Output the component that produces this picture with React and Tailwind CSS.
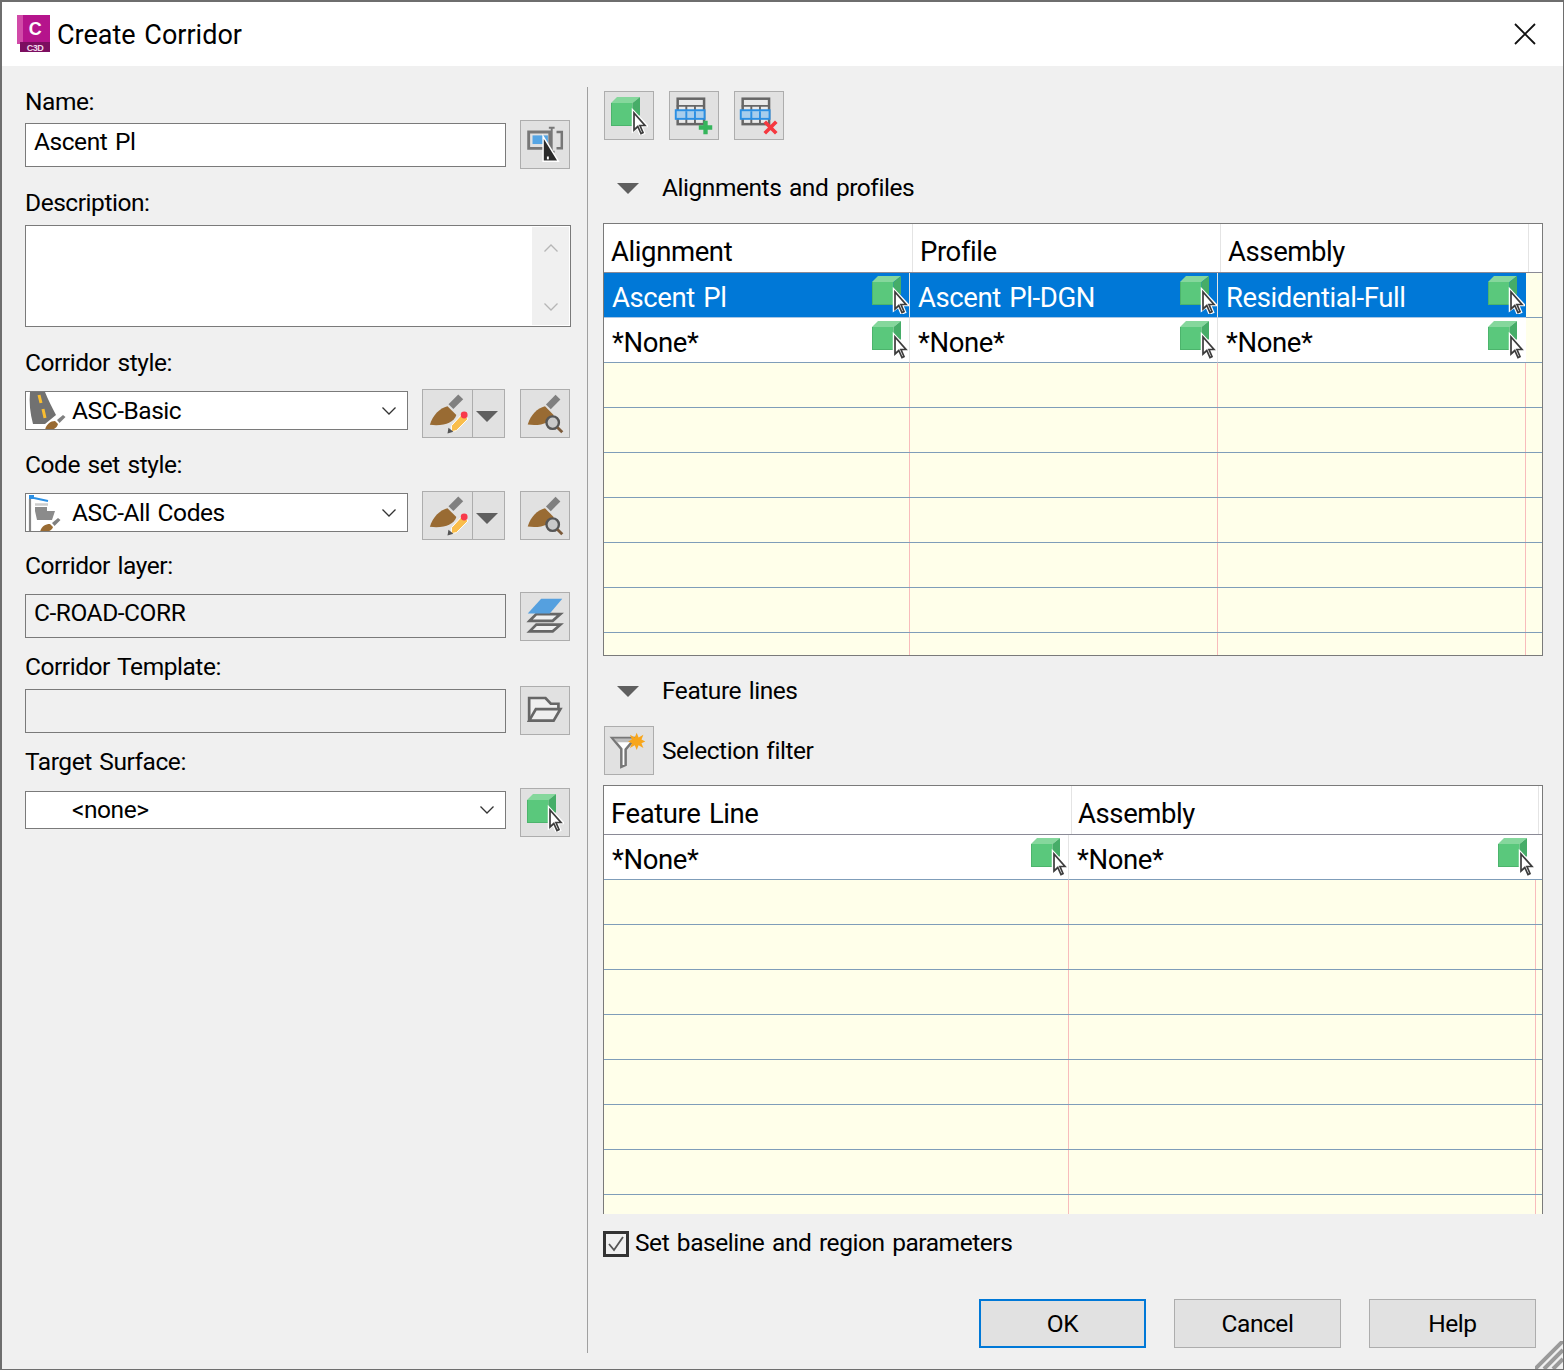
const CubeCursor = ({ className = "" }) => (
  <svg viewBox="7 6 37 38" className={`w-[37px] h-[38px] shrink-0 ${className}`}>
    <polygon points="7,12 13,6 36,6 28.500,12" fill="#85d79c" />
    <rect x="7" y="12" width="21.500" height="23" fill="#5ac87c" />
    <path d="M7 35h21.500v-1H8V12H7z" fill="#4cb46c" />
    <polygon points="28.500,12 36,6 36,24 28.500,32" fill="#46ad68" />
    <polygon points="29,20 29,40 33.500,36.500 36.500,43.500 40,42 37,35 43,35" fill="#fff" stroke="#fff" strokeWidth="2.500" />
    <polygon points="30,22 30,39 33.800,35.500 37,42.500 39,41.500 36,34.500 41,34.500" fill="#fff" stroke="#3c3c3c" strokeWidth="1.700" />
  </svg>
);

const Brush = () => (
  <>
    <path d="M7 36C10 26 17 19 25 17l9 9c-2 8-14 12-27 10z" fill="#996b33" />
    <path d="M26 15L36 5l5 5-10 10z" fill="#808080" />
  </>
);

const BrushEdit = () => (
  <svg viewBox="0 0 50 49" className="w-[50px] h-[49px]">
    <Brush />
    <path d="M29 37l11-12 6 5-12 12-5 1z" fill="#f9bd4b" stroke="#fff" strokeWidth="1" />
    <circle cx="42" cy="26" r="3.500" fill="#f8394a" />
    <path d="M26 39l5 4-6 2z" fill="#555" />
  </svg>
);

const BrushSearch = () => (
  <svg viewBox="0 0 50 49" className="w-[50px] h-[49px]">
    <Brush />
    <circle cx="33" cy="34" r="6.500" fill="#c9c9c9" stroke="#565656" strokeWidth="2.500" />
    <path d="M38 39l5 5" stroke="#7b5a3a" strokeWidth="3" />
  </svg>
);

const Naming = () => (
  <svg viewBox="0 0 50 49" className="w-[50px] h-[49px]">
    <path d="M8 11.500h22v17H8z" fill="none" stroke="#777" strokeWidth="3" />
    <rect x="12" y="15" width="16" height="9" fill="#55a5e4" />
    <path d="M29 7h6M32 7v25M29 32h6" stroke="#777" strokeWidth="2" fill="none" />
    <path d="M37 11.500h5.500v17H37" stroke="#777" strokeWidth="2.600" fill="none" />
    <polygon points="23,16 23,42 39,42" fill="#2b2b2b" stroke="#fff" strokeWidth="1.500" />
    <rect x="27" y="37" width="2" height="3" fill="#fff" />
  </svg>
);

const TableIcon = ({ children }) => (
  <svg viewBox="0 0 50 49" className="w-[50px] h-[49px]">
    <rect x="8" y="7" width="27.500" height="26.500" fill="#e9e9e9" stroke="#666" strokeWidth="2.600" />
    <path d="M7 14.500h29M17 14v20M26 14v20" stroke="#666" strokeWidth="2" />
    <rect x="6" y="19" width="30" height="9" fill="#a7cdec" stroke="#2b8fe3" strokeWidth="2" />
    <path d="M17 20v8M26 20v8" stroke="#2b8fe3" strokeWidth="2" />
    {children}
  </svg>
);

const Layers = () => (
  <svg viewBox="0 0 50 49" className="w-[50px] h-[49px]">
    <path d="M9 40l7-7h25l-8 7H9z" fill="#efefef" stroke="#666" strokeWidth="2.800" />
    <path d="M9 29l7-7h25l-8 7H9z" fill="#efefef" stroke="#666" strokeWidth="2.800" />
    <polygon points="7,21.500 21,6 43,6 30,21.500" fill="#55a0df" />
  </svg>
);

const Folder = () => (
  <svg viewBox="0 0 50 49" className="w-[50px] h-[49px]">
    <path d="M8.500 35V11.500h17l5.500 6h8V23" fill="#efefef" stroke="#666" strokeWidth="2.800" />
    <path d="M8.500 35l7-12H41l-7 12z" fill="#efefef" stroke="#666" strokeWidth="2.800" />
  </svg>
);

const Filter = () => (
  <svg viewBox="0 0 50 49" className="w-[50px] h-[49px]">
    <path d="M7.500 11.500h24l-10 12v16l-4.500 2V23z" fill="#fff" stroke="#777" strokeWidth="2.600" />
    <path d="M9 12h21l-3 4H13z" fill="#bdbdbd" />
    <polygon points="33,6 35,11 40,8 38,13 42,15 38,17 40,22 35,19 33,24 31,19 26,22 28,17 24,15 28,13 26,8 31,11" fill="#f8a61b" />
  </svg>
);

const RoadStyle = () => (
  <svg viewBox="0 0 40 40" className="w-[40px] h-[40px] shrink-0">
    <path d="M4 1h15c3 8 7 15 11 23L19 33H7C4 22 3 11 4 1z" fill="#717171" />
    <path d="M13 4l2 8M17 18l2 9" stroke="#f9bd31" strokeWidth="3" fill="none" />
    <path d="M19 39c1-5 5-9 10-9l3 3c-1 5-7 7-13 6z" fill="#996b33" />
    <path d="M31 29l6-5 2.500 2-6 6z" fill="#808080" />
  </svg>
);

const CodeStyle = () => (
  <svg viewBox="0 0 40 40" className="w-[40px] h-[40px] shrink-0">
    <rect x="3" y="2" width="5" height="4" fill="#2b8fe3" />
    <path d="M8 5l14 3" stroke="#2b8fe3" strokeWidth="1.800" />
    <path d="M4 6v33" stroke="#888" strokeWidth="2.200" />
    <path d="M9 14h12v4h8l-3 9H11l-2-9z" fill="#8b8b8b" />
    <path d="M9 11.500h13" stroke="#ccc" strokeWidth="2.500" />
    <path d="M14 39c1-5 5-8 10-8l3 3c-1 4-7 6-13 5z" fill="#996b33" />
    <path d="M26 30l6-5 2.500 2-6 6z" fill="#808080" />
  </svg>
);

const Chevron = ({ className = "" }) => (
  <svg viewBox="0 0 16 10" className={`w-[16px] h-[10px] ${className}`}>
    <path d="M1.500 1.500L8 8l6.500-6.500" fill="none" stroke="#333" strokeWidth="1.300" />
  </svg>
);

const Triangle = ({ className = "" }) => (
  <svg viewBox="0 0 22 11" className={`w-[22px] h-[11px] ${className}`}>
    <polygon points="0,0 22,0 11,11" fill="#5f5f5f" />
  </svg>
);

const Btn = ({ children }) => (
  <div className="w-[50px] h-[49px] shrink-0 bg-[#e1e1e1] border border-[#adadad] flex items-center justify-center overflow-hidden">
    {children}
  </div>
);

const SplitBtn = () => (
  <div className="w-[83px] h-[49px] shrink-0 bg-[#e1e1e1] border border-[#adadad] flex items-center">
    <div className="w-[50px] h-full border-r border-[#adadad] flex items-center justify-center">
      <BrushEdit />
    </div>
    <div className="flex-1 flex items-center justify-center pr-[4px] pt-[6px]">
      <Triangle />
    </div>
  </div>
);

const Label = ({ className = "", children }) => (
  <div className={`h-[34px] leading-[34px] text-[24.500px] text-black ${className}`}>{children}</div>
);

const Combo = ({ icon, text, className = "" }) => (
  <div className={`bg-white border border-[#7a7a7a] flex items-center text-[24.500px] overflow-hidden ${className}`}>
    <div className="w-[46px] shrink-0">{icon}</div>
    <span className="flex-1 pt-[1px]">{text}</span>
    <Chevron className="mr-[10px]" />
  </div>
);

const Cell = ({ text, selected, last, w }) => (
  <div
    className={`${w} h-[45px] flex items-start justify-between border-b ${
      selected ? "bg-[#0078d7] text-white border-[#a9c6e4]" : "bg-white text-black border-[#7f9db9]"
    } ${last ? "pr-[1px]" : "border-r border-r-[#e4e4e4]"}`}
  >
    <span className="pl-[8px] leading-[49px]">{text}</span>
    <CubeCursor className="mt-[3px]" />
  </div>
);

const EmptyRow = ({ cols }) => (
  <div className="flex h-[45px] shrink-0 border-b border-[#7f9db9]">
    {cols.map((w) => (
      <div key={w} className={`${w} h-full bg-[#ffffea] border-r border-[#f8bcbc]`} />
    ))}
    <div className="flex-1 bg-[#ffffea]" />
  </div>
);

const AlignCols = ["w-[306px]", "w-[308px]", "w-[308px]"];
const FeatureCols = ["w-[465px]", "w-[467px]"];

const AlignTable = () => (
  <div className="mt-[18px] w-[940px] h-[433px] border border-[#7a7a7a] bg-[#ffffea] overflow-hidden text-[27.500px] tracking-[-0.4px]">
    <div className="flex h-[49px] bg-white border-b border-[#8a8a96]">
      <div className="w-[309px] border-r border-[#e4e4e4] pl-[7px] leading-[56px]">Alignment</div>
      <div className="w-[308px] border-r border-[#e4e4e4] pl-[7px] leading-[56px]">Profile</div>
      <div className="w-[308px] border-r border-[#e4e4e4] pl-[7px] leading-[56px]">Assembly</div>
    </div>
    <div className="flex">
      <Cell w="w-[306px]" selected text="Ascent Pl" />
      <Cell w="w-[308px]" selected text="Ascent Pl-DGN" />
      <Cell w="w-[308px]" selected last text="Residential-Full" />
      <div className="flex-1 border-b border-[#7f9db9]" />
    </div>
    <div className="flex">
      <Cell w="w-[306px]" text="*None*" />
      <Cell w="w-[308px]" text="*None*" />
      <Cell w="w-[308px]" last text="*None*" />
      <div className="flex-1 border-b border-[#7f9db9]" />
    </div>
    {[1, 2, 3, 4, 5, 6, 7].map((r) => (
      <EmptyRow key={r} cols={AlignCols} />
    ))}
  </div>
);

const FeatureTable = () => (
  <div className="mt-[10px] w-[940px] h-[429px] border-x border-t border-[#7a7a7a] bg-[#ffffea] overflow-hidden text-[27.500px] tracking-[-0.4px]">
    <div className="flex h-[49px] bg-white border-b border-[#8a8a96]">
      <div className="w-[468px] border-r border-[#e4e4e4] pl-[7px] leading-[56px]">Feature Line</div>
      <div className="w-[467px] border-r border-[#e4e4e4] pl-[6px] leading-[56px]">Assembly</div>
    </div>
    <div className="flex">
      <Cell w="w-[465px]" text="*None*" />
      <Cell w="w-[467px]" last text="*None*" />
      <div className="flex-1 bg-white border-b border-[#7f9db9]" />
    </div>
    {[1, 2, 3, 4, 5, 6, 7, 8].map((r) => (
      <EmptyRow key={r} cols={FeatureCols} />
    ))}
  </div>
);

const DialogBtn = ({ children, primary }) => (
  <div
    className={`w-[167px] h-[49px] bg-[#e1e1e1] flex items-center justify-center pt-[2px] text-[24.500px] ${
      primary ? "border-2 border-[#0078d7]" : "border border-[#adadad]"
    }`}
  >
    {children}
  </div>
);

export default function App() {
  return (
    <div className="relative box-border w-[1564px] h-[1370px] overflow-hidden bg-[#f0f0f0] border-l-2 border-t-2 border-r border-b border-[#6e6e6e] text-black font-['Roboto',sans-serif] tracking-[-0.45px] [word-spacing:2px]">
      {/* Title bar */}
      <div className="h-[64px] bg-white flex items-center pl-[15px] pr-[27px]">
        <svg viewBox="0 0 34 37" className="w-[34px] h-[37px] shrink-0 mb-[2px]">
          <polygon points="0,0 33,0 33,37 3,37 3,29 0,29" fill="#b5148c" />
          <polygon points="0,0 6,0 6,29 0,29" fill="#d14aa8" />
          <rect x="3" y="27" width="30" height="10" fill="#7c0e60" />
          <text x="18" y="20" fontSize="18" fontWeight="700" fill="#fff" textAnchor="middle" fontFamily="Liberation Sans">C</text>
          <text x="18" y="35.500" fontSize="9" fontWeight="700" fill="#f0d8ea" textAnchor="middle" fontFamily="Liberation Sans">C3D</text>
        </svg>
        <span className="ml-[6px] pt-[2px] text-[27px] tracking-normal flex-1">Create Corridor</span>
        <svg viewBox="0 0 22 22" className="w-[22px] h-[22px]">
          <path d="M1 1l20 20M21 1L1 21" stroke="#111" strokeWidth="1.800" />
        </svg>
      </div>

      <div className="flex">
        {/* Left column */}
        <div className="ml-[23px] w-[546px] pt-[19px] shrink-0">
          <Label>Name:</Label>
          <div className="mt-[1px] flex items-start justify-between pr-[1px]">
            <div className="mt-[3px] w-[481px] h-[44px] bg-white border border-[#7a7a7a] pl-[8px] text-[24.500px] leading-[35px]">Ascent Pl</div>
            <Btn><Naming /></Btn>
          </div>

          <Label className="mt-[17px]">Description:</Label>
          <div className="mt-[5px] h-[102px] bg-white border border-[#7a7a7a] flex justify-end">
            <div className="w-[37px] m-[1px] bg-[#f0f0f0] flex flex-col items-center justify-between pt-[16px] pb-[13px]">
              <Chevron className="rotate-180 opacity-30" />
              <Chevron className="opacity-30" />
            </div>
          </div>

          <Label className="mt-[19px]">Corridor style:</Label>
          <div className="mt-[9px] flex items-start">
            <Combo icon={<RoadStyle />} text="ASC-Basic" className="mt-[2px] w-[383px] h-[39px]" />
            <div className="ml-[14px]"><SplitBtn /></div>
            <div className="ml-[15px]"><Btn><BrushSearch /></Btn></div>
          </div>

          <Label className="mt-[10px]">Code set style:</Label>
          <div className="mt-[9px] flex items-start">
            <Combo icon={<CodeStyle />} text="ASC-All Codes" className="mt-[2px] w-[383px] h-[39px]" />
            <div className="ml-[14px]"><SplitBtn /></div>
            <div className="ml-[15px]"><Btn><BrushSearch /></Btn></div>
          </div>

          <Label className="mt-[9px]">Corridor layer:</Label>
          <div className="mt-[9px] flex items-start justify-between pr-[1px]">
            <div className="mt-[2px] w-[481px] h-[44px] border border-[#7a7a7a] pl-[8px] text-[24.500px] leading-[35px]">C-ROAD-CORR</div>
            <Btn><Layers /></Btn>
          </div>

          <Label className="mt-[9px]">Corridor Template:</Label>
          <div className="mt-[2px] flex items-start justify-between pr-[1px]">
            <div className="mt-[3px] w-[481px] h-[44px] border border-[#7a7a7a]" />
            <Btn><Folder /></Btn>
          </div>

          <Label className="mt-[10px]">Target Surface:</Label>
          <div className="mt-[9px] flex items-start justify-between pr-[1px]">
            <Combo icon={null} text={"<none>"} className="mt-[3px] w-[481px] h-[38px]" />
            <Btn><CubeCursor /></Btn>
          </div>
        </div>

        {/* Divider */}
        <div className="ml-[16px] mt-[21px] w-px h-[1266px] bg-[#a0a0a0]" />

        {/* Right column */}
        <div className="ml-[15px] w-[940px] pt-[25px]">
          <div className="flex gap-[15px] pl-[1px]">
            <Btn><CubeCursor /></Btn>
            <Btn>
              <TableIcon>
                <path d="M37 30v14M30 37h14" stroke="#35b55c" strokeWidth="4.500" />
              </TableIcon>
            </Btn>
            <Btn>
              <TableIcon>
                <path d="M31 31l12 12M43 31L31 43" stroke="#f5383f" strokeWidth="3.800" />
              </TableIcon>
            </Btn>
          </div>

          <div className="mt-[31px] flex items-center h-[34px] pl-[14px]">
            <Triangle />
            <span className="ml-[23px] text-[24.500px]">Alignments and profiles</span>
          </div>
          <AlignTable />

          <div className="mt-[18px] flex items-center h-[34px] pl-[14px]">
            <Triangle />
            <span className="ml-[23px] text-[24.500px]">Feature lines</span>
          </div>
          <div className="mt-[18px] flex items-center pl-[1px]">
            <Btn><Filter /></Btn>
            <span className="ml-[8px] pt-[2px] text-[24.500px]">Selection filter</span>
          </div>
          <FeatureTable />

          <div className="mt-[17px] flex items-center h-[25px]">
            <div className="w-[26px] h-[26px] border-[3px] border-[#333] bg-[#f0f0f0] flex items-center justify-center">
              <svg viewBox="0 0 20 20" className="w-[20px] h-[20px]">
                <path d="M3 10l5 6L17 3" fill="none" stroke="#555" strokeWidth="1.800" />
              </svg>
            </div>
            <span className="ml-[6px] text-[24.500px]">Set baseline and region parameters</span>
          </div>

          <div className="mt-[43px] flex justify-end gap-[28px] pr-[7px]">
            <DialogBtn primary>OK</DialogBtn>
            <DialogBtn>Cancel</DialogBtn>
            <DialogBtn>Help</DialogBtn>
          </div>
        </div>
      </div>

      {/* Resize grip */}
      <svg viewBox="0 0 28 28" className="absolute right-0 bottom-0 w-[28px] h-[28px]">
        <path d="M0 28L28 0M9 28L28 9M18 28L28 18" stroke="#9a9a9a" strokeWidth="4" />
      </svg>
    </div>
  );
}
